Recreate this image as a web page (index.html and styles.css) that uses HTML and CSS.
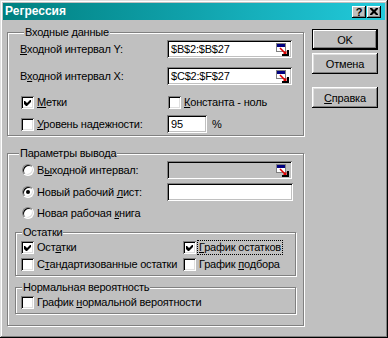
FILE: index.html
```html
<!DOCTYPE html>
<html>
<head>
<meta charset="utf-8">
<link rel="stylesheet" href="styles.css">
</head>
<body>
<div class="window">
  <div class="titlebar">
    <span class="title">Регрессия</span>
    <div class="caption-buttons">
      <span class="cbtn help">?</span>
      <span class="cbtn close"><svg width="8" height="7" viewBox="0 0 8 7"><path d="M0 0h2l2 2 2-2h2v1L5.5 3.5 8 6v1H6L4 5 2 7H0V6l2.5-2.5L0 1z" fill="#000"/></svg></span>
    </div>
  </div>
  <div class="client">
    <div class="main">
      <div class="group g1">
        <div class="gtitle">Входные данные</div>
        <div class="frow r1">
          <span class="flabel"><u>В</u>ходной интервал Y:</span>
          <div class="field"><span>$B$2:$B$27</span><svg class="ricon" width="13" height="13" viewBox="0 0 13 13"><rect x="0.5" y="0.5" width="9" height="8" fill="#fff" stroke="#808080"/><rect x="1" y="1" width="8" height="3" fill="#000080"/><path d="M4 5l5 5" stroke="#e00000" stroke-width="1.6"/><path d="M10.5 11.5v-4l-4 4z" fill="#e00000"/><rect x="6" y="11" width="7" height="2" fill="#000"/><rect x="11" y="7" width="2" height="6" fill="#000"/></svg></div>
        </div>
        <div class="frow r2">
          <span class="flabel">В<u>х</u>одной интервал X:</span>
          <div class="field"><span>$C$2:$F$27</span><svg class="ricon" width="13" height="13" viewBox="0 0 13 13"><rect x="0.5" y="0.5" width="9" height="8" fill="#fff" stroke="#808080"/><rect x="1" y="1" width="8" height="3" fill="#000080"/><path d="M4 5l5 5" stroke="#e00000" stroke-width="1.6"/><path d="M10.5 11.5v-4l-4 4z" fill="#e00000"/><rect x="6" y="11" width="7" height="2" fill="#000"/><rect x="11" y="7" width="2" height="6" fill="#000"/></svg></div>
        </div>
        <div class="frow r3 crow">
          <div class="opt w147"><span class="cb"><svg width="13" height="13" viewBox="0 0 13 13"><path d="M3 5h1l2 2 3-3h1v2l-4 4h-1l-2-2z" fill="#000"/></svg></span><span class="lbl"><u>М</u>етки</span></div>
          <div class="opt"><span class="cb"></span><span class="lbl"><u>К</u>онстанта - ноль</span></div>
        </div>
        <div class="frow r4 crow">
          <div class="opt w146"><span class="cb"></span><span class="lbl"><u>У</u>ровень надежности:</span></div>
          <div class="field small"><span>95</span></div>
          <span class="pct">%</span>
        </div>
      </div>

      <div class="group g2">
        <div class="gtitle">Параметры вывода</div>
        <div class="frow q1 rrow">
          <div class="opt w145"><span class="rb"></span><span class="lbl">В<u>ы</u>ходной интервал:</span></div>
          <div class="field disabled"><span></span><svg class="ricon" width="13" height="13" viewBox="0 0 13 13"><rect x="0.5" y="0.5" width="9" height="8" fill="#fff" stroke="#808080"/><rect x="1" y="1" width="8" height="3" fill="#000080"/><path d="M4 5l5 5" stroke="#e00000" stroke-width="1.6"/><path d="M10.5 11.5v-4l-4 4z" fill="#e00000"/><rect x="6" y="11" width="7" height="2" fill="#000"/><rect x="11" y="7" width="2" height="6" fill="#000"/></svg></div>
        </div>
        <div class="frow q2 rrow">
          <div class="opt w145"><span class="rb on"></span><span class="lbl">Новый рабочий <u>л</u>ист:</span></div>
          <div class="field wide"><span></span></div>
        </div>
        <div class="frow q3 rrow">
          <div class="opt"><span class="rb"></span><span class="lbl">Новая рабочая <u>к</u>нига</span></div>
        </div>

        <div class="group sub s1">
          <div class="gtitle">Остатки</div>
          <div class="crow srow">
            <div class="opt w162"><span class="cb"><svg width="13" height="13" viewBox="0 0 13 13"><path d="M3 5h1l2 2 3-3h1v2l-4 4h-1l-2-2z" fill="#000"/></svg></span><span class="lbl">Ост<u>а</u>тки</span></div>
            <div class="opt"><span class="cb"><svg width="13" height="13" viewBox="0 0 13 13"><path d="M3 5h1l2 2 3-3h1v2l-4 4h-1l-2-2z" fill="#000"/></svg></span><span class="lbl focus"><u>Г</u>рафик остатков</span></div>
          </div>
          <div class="crow srow">
            <div class="opt w162"><span class="cb"></span><span class="lbl">С<u>т</u>андартизованные остатки</span></div>
            <div class="opt"><span class="cb"></span><span class="lbl">График <u>п</u>одбора</span></div>
          </div>
        </div>

        <div class="group sub s2">
          <div class="gtitle">Нормальная вероятность</div>
          <div class="crow srow">
            <div class="opt"><span class="cb"></span><span class="lbl">График <u>н</u>ормальной вероятности</span></div>
          </div>
        </div>
      </div>
    </div>

    <div class="buttons">
      <div class="btn default">OK</div>
      <div class="btn">Отмена</div>
      <div class="btn help-btn"><u>С</u>правка</div>
    </div>
  </div>
</div>
</body>
</html>
```

FILE: styles.css
```css
* { box-sizing: border-box; }
html, body { margin: 0; padding: 0; }
body {
  font-family: "Liberation Sans", Arial, sans-serif;
  font-size: 11px;
  letter-spacing: -0.2px;
  color: #000;
  background: #c0c0c0;
}
u { text-decoration: underline; text-underline-offset: 1px; }

.window {
  width: 388px;
  height: 338px;
  background: #c0c0c0;
  padding: 3px;
  box-shadow: inset -1px -1px #000, inset 1px 1px #dfdfdf, inset -2px -2px #808080, inset 2px 2px #fff;
}

.titlebar {
  height: 17px;
  display: flex;
  align-items: center;
  justify-content: space-between;
  background: linear-gradient(90deg, #008080 0%, #0f9fa8 45%, #22cadb 100%);
  padding: 0 4px 0 2px;
}
.title {
  color: #fff;
  font-weight: bold;
  font-size: 12px;
  letter-spacing: 0;
  line-height: 17px;
}
.caption-buttons { display: flex; gap: 1px; }
.cbtn {
  width: 14px;
  height: 12px;
  background: #c0c0c0;
  box-shadow: inset -1px -1px #000, inset 1px 1px #fff, inset -2px -2px #808080;
  display: flex;
  align-items: center;
  justify-content: center;
  font-weight: bold;
  font-size: 11px;
  line-height: 12px;
}
.cbtn svg { display: block; }

.client { display: flex; padding-left: 4px; }
.main { width: 297px; margin-top: 12px; }

.group {
  border: 1px solid #808080;
  box-shadow: 1px 1px 0 #fff, inset 1px 1px 0 #fff;
}
.gtitle {
  margin-top: -8px;
  height: 14px;
  line-height: 14px;
  width: max-content;
  padding: 0 1px;
  margin-left: 4px;
  background: #c0c0c0;
}

.g1 { padding: 0 0 2px 12px; }
.frow { display: flex; align-items: center; height: 18px; }
.r1 { margin-top: 1px; }
.r2 { margin-top: 9px; }
.r3 { margin-top: 8px; margin-left: 1px; }
.r4 { margin-top: 4px; margin-left: 1px; }
.flabel { width: 147px; flex: none; }

.field {
  width: 125px;
  height: 18px;
  flex: none;
  background: #fff;
  box-shadow: inset 1px 1px #808080, inset -1px -1px #fff, inset 2px 2px #000, inset -2px -2px #c0c0c0;
  display: flex;
  align-items: center;
  justify-content: space-between;
  padding: 0 3px 0 4px;
}
.field.small { width: 40px; }
.field.wide { width: 126px; }
.field.disabled { background: #c0c0c0; }
.ricon { display: block; flex: none; }
.pct { margin-left: 5px; }

.crow { display: flex; align-items: center; }
.opt { display: flex; align-items: center; flex: none; }
.w147 { width: 147px; }
.w146 { width: 146px; }
.w145 { width: 145px; }
.w162 { width: 162px; }

.cb {
  width: 13px;
  height: 13px;
  flex: none;
  background: #fff;
  box-shadow: inset 1px 1px #808080, inset -1px -1px #fff, inset 2px 2px #000, inset -2px -2px #dfdfdf;
}
.cb svg { display: block; }
.lbl {
  margin-left: 1px;
  border: 1px dotted transparent;
  padding: 0 1px;
  line-height: 13px;
  white-space: nowrap;
}
.lbl.focus { border-color: #000; }

.rb {
  width: 12px;
  height: 12px;
  flex: none;
  border-radius: 50%;
  background: #fff;
  border: 1px solid;
  border-color: #808080 #fff #fff #808080;
  box-shadow: inset 1px 1px #000, inset -1px -1px #dfdfdf;
  display: flex;
  align-items: center;
  justify-content: center;
}
.rb.on::after {
  content: "";
  width: 4px;
  height: 4px;
  border-radius: 50%;
  background: #000;
}

.g2 { margin-top: 17px; padding: 0 7px 11px 7px; }
.rrow { margin-left: 7px; }
.q1 { margin-top: 1px; }
.q2 { margin-top: 4px; }
.q3 { margin-top: 3px; }

.sub .gtitle { margin-left: 1px; }
.s1 { margin-top: 10px; padding: 0 0 2px 5px; }
.s2 { margin-top: 11px; padding: 0 0 2px 5px; }
.srow { height: 17px; }

.buttons {
  margin-left: 8px;
  margin-top: 9px;
  display: flex;
  flex-direction: column;
}
.btn {
  width: 66px;
  height: 21px;
  display: flex;
  align-items: center;
  justify-content: center;
  background: #c0c0c0;
  box-shadow: inset -1px -1px #000, inset 1px 1px #fff, inset -2px -2px #808080, inset 2px 2px #dfdfdf;
}
.btn + .btn { margin-top: 3px; }
.btn.help-btn { margin-top: 13px; }
.btn.default {
  border: 1px solid #000;
  box-shadow: inset -1px -1px #000, inset 1px 1px #fff, inset -2px -2px #808080;
}
```
